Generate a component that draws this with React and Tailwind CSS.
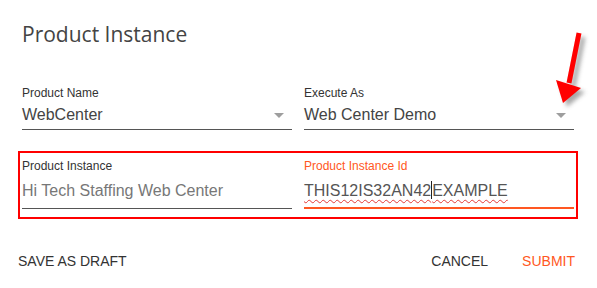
import React from "react";

function Caret() {
  return (
    <svg width="10" height="5" viewBox="0 0 10 5" className="shrink-0">
      <path d="M0 0 L10 0 L5 5 Z" fill="#9e9e9e" />
    </svg>
  );
}

function SelectField({ label, value }) {
  return (
    <div className="flex flex-col">
      <div className="text-[12px] leading-[16px] text-[#333]">{label}</div>
      <div className="mt-[4px] flex items-center justify-between border-b border-[#555] pb-[4px] pr-[8px]">
        <span className="text-[16px] leading-[20px] text-[#444]">{value}</span>
        <Caret />
      </div>
    </div>
  );
}

export default function App() {
  return (
    <div
      className="relative w-[597px] h-[288px] bg-white overflow-hidden"
      style={{ fontFamily: '"Liberation Sans", Arial, sans-serif' }}
    >
      <div className="px-[22px] pt-[20px]">
        <h1
          className="text-[21px] leading-[28px] text-[#444] font-normal"
          style={{ fontFamily: '"Open Sans", sans-serif' }}
        >
          Product Instance
        </h1>

        <div className="mt-[37px] grid grid-cols-[270px_270px] gap-x-[12px]">
          <SelectField label="Product Name" value="WebCenter" />
          <SelectField label="Execute As" value="Web Center Demo" />
        </div>

        <div className="mt-[28px] grid grid-cols-[270px_270px] gap-x-[12px]">
          <div className="flex flex-col">
            <div className="text-[12px] leading-[16px] text-[#333]">Product Instance</div>
            <div className="mt-[5px] border-b border-[#555] pb-[5px]">
              <span className="text-[16px] leading-[20px] text-[#777]">
                Hi Tech Staffing Web Center
              </span>
            </div>
          </div>
          <div className="flex flex-col">
            <div className="text-[12px] leading-[16px] text-[#ff5722]">Product Instance Id</div>
            <div className="mt-[5px] border-b-2 border-[#ff5722] pb-[4px]">
              <span className="text-[16px] leading-[20px] text-[#555] underline decoration-wavy decoration-[#e53935] decoration-1 underline-offset-[3px]">
                THIS12IS32AN42
                <span className="inline-block w-px h-[18px] bg-[#222] align-[-3px]" />
                EXAMPLE
              </span>
            </div>
          </div>
        </div>
      </div>

      <div className="mt-[44px] flex items-center pl-[18px] pr-[22px] text-[14px] leading-[16px]">
        <span className="text-[#333]">SAVE AS DRAFT</span>
        <span className="ml-auto text-[#333]">CANCEL</span>
        <span className="ml-[34px] text-[#ff5722]">SUBMIT</span>
      </div>

      {/* annotation box */}
      <div className="absolute left-[18px] top-[151px] w-[560px] h-[68px] border-2 border-[#ff0000] pointer-events-none" />

      {/* annotation arrow */}
      <svg
        className="absolute left-[540px] top-[25px] pointer-events-none"
        width="57"
        height="92"
        viewBox="0 0 57 92"
      >
        <defs>
          <filter id="sh" x="-50%" y="-50%" width="200%" height="200%">
            <feGaussianBlur stdDeviation="2" />
          </filter>
        </defs>
        <g transform="translate(4,4)" filter="url(#sh)" opacity="0.5">
          <path d="M39 8 L29 58" stroke="#555" strokeWidth="5" />
          <path d="M16 55 L41 63 L23 78 Z" fill="#555" />
        </g>
        <path d="M39 8 L29 58" stroke="#ff0000" strokeWidth="5" />
        <path d="M16 55 L41 63 L23 78 Z" fill="#ff0000" />
      </svg>
    </div>
  );
}
